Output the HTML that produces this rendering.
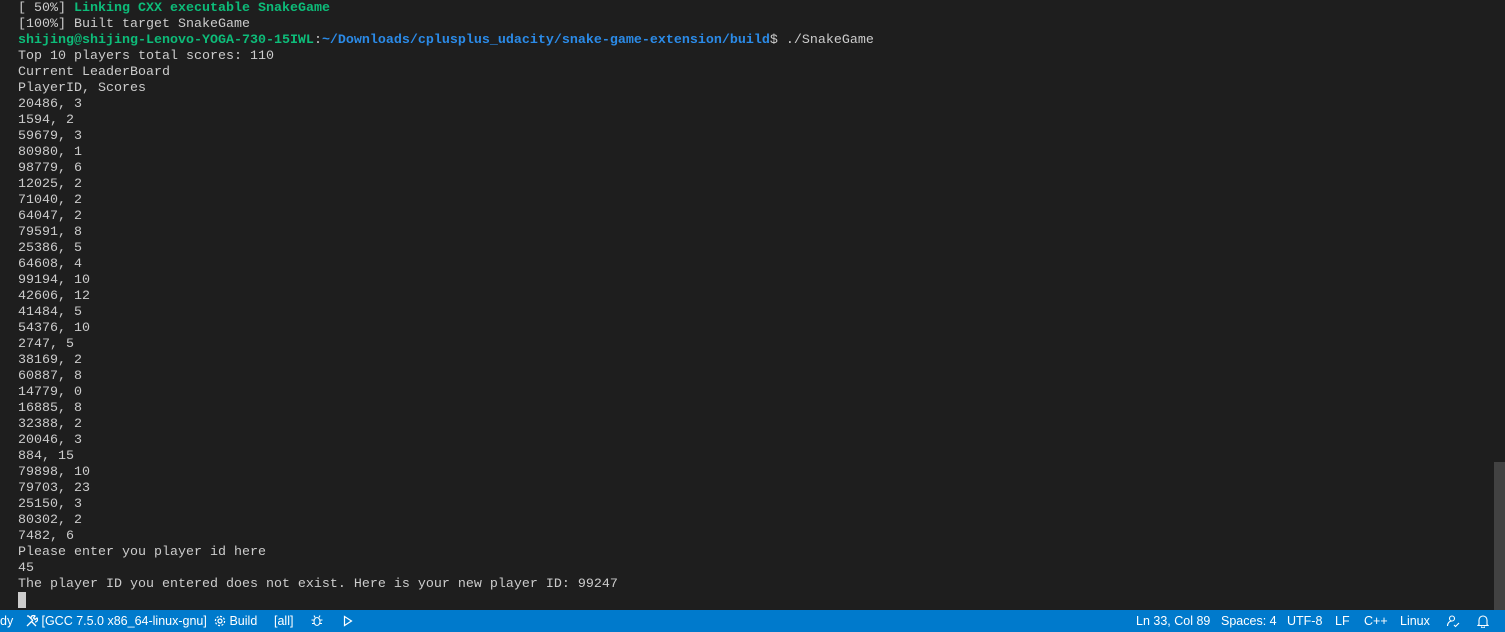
<!DOCTYPE html>
<html><head><meta charset="utf-8"><style>
html,body{margin:0;padding:0;width:1505px;height:632px;overflow:hidden;background:#1e1e1e;}
#term{position:absolute;left:18px;top:1px;font-family:"Liberation Mono",monospace;font-size:13.33px;line-height:16px;color:#cccccc;white-space:pre;}
.g{color:#0dbc79;font-weight:bold}
.b{color:#2b8be8;font-weight:bold}
#cur{position:absolute;left:18px;top:592px;width:8px;height:16px;background:#cccccc}
#sb{position:absolute;right:0;top:462px;width:11px;height:148px;background:#424242}
#status{position:absolute;left:0;top:610px;width:1505px;height:22px;background:#007acc;color:#fff;font-family:"Liberation Sans",sans-serif;font-size:12.5px;line-height:22px;}
#status span{position:absolute;top:0;white-space:nowrap}
</style></head><body>
<div id="term"><span style="color:#ccc">[ 50%] </span><span class="g">Linking CXX executable SnakeGame</span>
[100%] Built target SnakeGame
<span class="g">shijing@shijing-Lenovo-YOGA-730-15IWL</span>:<span class="b">~/Downloads/cplusplus_udacity/snake-game-extension/build</span>$ ./SnakeGame
Top 10 players total scores: 110
Current LeaderBoard
PlayerID, Scores
20486, 3
1594, 2
59679, 3
80980, 1
98779, 6
12025, 2
71040, 2
64047, 2
79591, 8
25386, 5
64608, 4
99194, 10
42606, 12
41484, 5
54376, 10
2747, 5
38169, 2
60887, 8
14779, 0
16885, 8
32388, 2
20046, 3
884, 15
79898, 10
79703, 23
25150, 3
80302, 2
7482, 6
Please enter you player id here
45
The player ID you entered does not exist. Here is your new player ID: 99247</div>
<div id="cur"></div>
<div id="sb"></div>
<div id="status">
<span style="left:0">dy</span>
<span style="left:26px"><svg width="12" height="12" viewBox="0 0 12 12" style="vertical-align:-2px" fill="none" stroke="#fff" stroke-width="1.3"><path d="M1 11L7 5M5 3a2.5 2.5 0 0 1 4-2L7.5 3 9 4.5 11 3a2.5 2.5 0 0 1-2 4M1 1l1.5 0 4 4M6 7l4 4"/></svg> [GCC 7.5.0 x86_64-linux-gnu]</span>
<span style="left:214px"><svg width="12" height="12" viewBox="0 0 12 12" style="vertical-align:-2px" fill="none" stroke="#fff" stroke-width="1.2"><circle cx="6" cy="6" r="2"/><circle cx="6" cy="6" r="4.6" stroke-dasharray="2 1.6"/></svg> Build</span>
<span style="left:274px">[all]</span>
<span style="left:311px"><svg width="12" height="13" viewBox="0 0 12 13" fill="none" stroke="#fff" stroke-width="1.1" style="vertical-align:-2px"><ellipse cx="6" cy="7.5" rx="3" ry="4"/><path d="M3 6H0.5M9 6h2.5M3 9.5H1M9 9.5h2M4 3.5l-1-2M8 3.5l1-2"/></svg></span>
<span style="left:343px"><svg width="10" height="12" viewBox="0 0 10 12" fill="none" stroke="#fff" stroke-width="1.2" style="vertical-align:-2px"><path d="M1.5 1.5L8.5 6L1.5 10.5Z"/></svg></span>
<span style="left:1136px">Ln 33, Col 89</span>
<span style="left:1221px">Spaces: 4</span>
<span style="left:1287px">UTF-8</span>
<span style="left:1335px">LF</span>
<span style="left:1364px">C++</span>
<span style="left:1400px">Linux</span>
<span style="left:1446px"><svg width="14" height="14" viewBox="0 0 14 14" fill="none" stroke="#fff" stroke-width="1.1" style="vertical-align:-3px"><circle cx="6" cy="4.5" r="2.5"/><path d="M1.5 12c0-3 2-5 4.5-5M8 11l1.5 1.5L13 9"/></svg></span>
<span style="left:1477px"><svg width="12" height="14" viewBox="0 0 12 14" fill="none" stroke="#fff" stroke-width="1.1" style="vertical-align:-3px"><path d="M2 10.5V6a4 4 0 0 1 8 0v4.5l1 1H1Z M4.5 12.5a1.5 1.5 0 0 0 3 0"/></svg></span>
</div>
</body></html>
